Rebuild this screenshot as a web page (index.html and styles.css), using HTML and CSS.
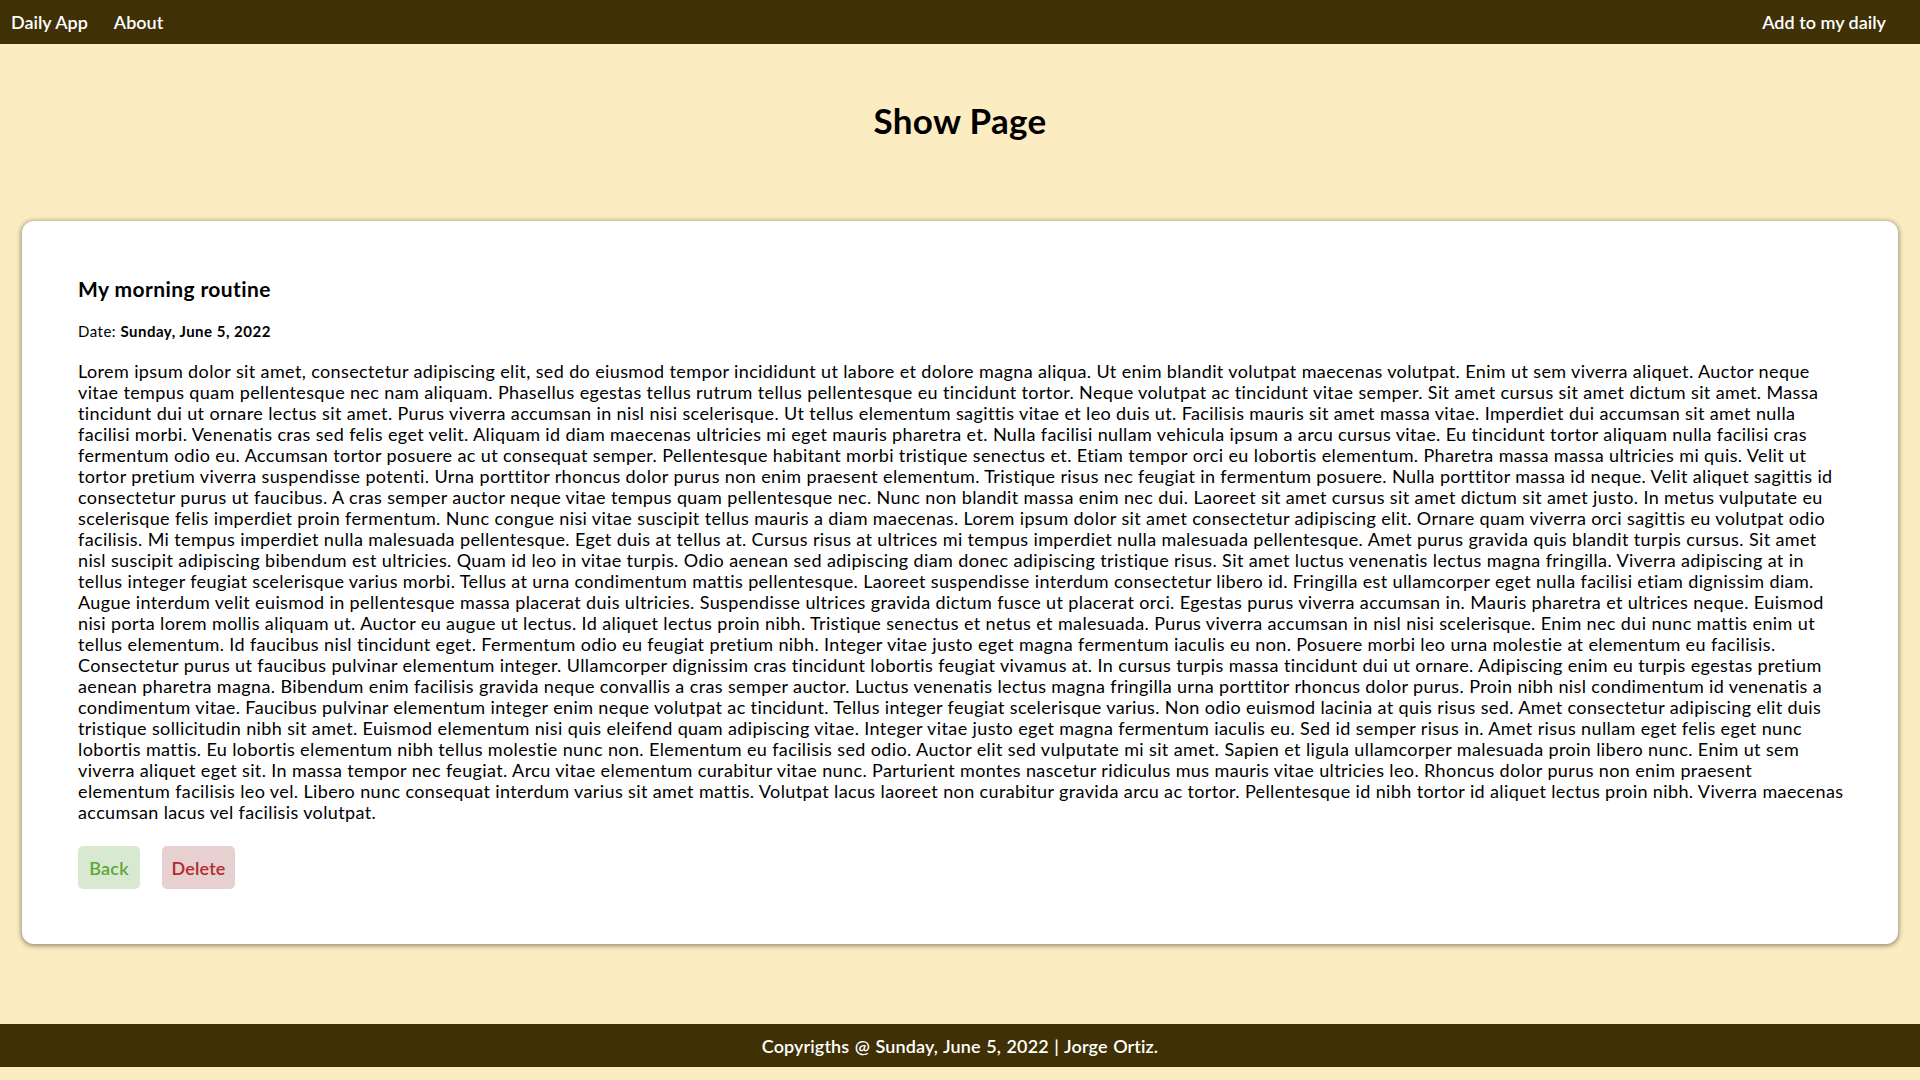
FILE: index.html
```html
<!DOCTYPE html>
<html lang="en">
<head>
<meta charset="utf-8">
<title>Show Page</title>
<link rel="stylesheet" href="styles.css">
</head>
<body>
<nav class="navbar">
  <div class="nav-left">
    <a class="nav-brand" href="#">Daily App</a>
    <a class="nav-link" href="#">About</a>
  </div>
  <a class="nav-link" href="#">Add to my daily</a>
</nav>
<main class="main">
  <h1 class="page-title">Show Page</h1>
  <section class="card">
    <h5 class="card-title">My morning routine</h5>
    <p class="card-date">Date: <strong>Sunday, June 5, 2022</strong></p>
    <p class="card-text">Lorem ipsum dolor sit amet, consectetur adipiscing elit, sed do eiusmod tempor incididunt ut labore et dolore magna aliqua. Ut enim blandit volutpat maecenas volutpat. Enim ut sem viverra aliquet. Auctor neque vitae tempus quam pellentesque nec nam aliquam. Phasellus egestas tellus rutrum tellus pellentesque eu tincidunt tortor. Neque volutpat ac tincidunt vitae semper. Sit amet cursus sit amet dictum sit amet. Massa tincidunt dui ut ornare lectus sit amet. Purus viverra accumsan in nisl nisi scelerisque. Ut tellus elementum sagittis vitae et leo duis ut. Facilisis mauris sit amet massa vitae. Imperdiet dui accumsan sit amet nulla facilisi morbi. Venenatis cras sed felis eget velit. Aliquam id diam maecenas ultricies mi eget mauris pharetra et. Nulla facilisi nullam vehicula ipsum a arcu cursus vitae. Eu tincidunt tortor aliquam nulla facilisi cras fermentum odio eu. Accumsan tortor posuere ac ut consequat semper. Pellentesque habitant morbi tristique senectus et. Etiam tempor orci eu lobortis elementum. Pharetra massa massa ultricies mi quis. Velit ut tortor pretium viverra suspendisse potenti. Urna porttitor rhoncus dolor purus non enim praesent elementum. Tristique risus nec feugiat in fermentum posuere. Nulla porttitor massa id neque. Velit aliquet sagittis id consectetur purus ut faucibus. A cras semper auctor neque vitae tempus quam pellentesque nec. Nunc non blandit massa enim nec dui. Laoreet sit amet cursus sit amet dictum sit amet justo. In metus vulputate eu scelerisque felis imperdiet proin fermentum. Nunc congue nisi vitae suscipit tellus mauris a diam maecenas. Lorem ipsum dolor sit amet consectetur adipiscing elit. Ornare quam viverra orci sagittis eu volutpat odio facilisis. Mi tempus imperdiet nulla malesuada pellentesque. Eget duis at tellus at. Cursus risus at ultrices mi tempus imperdiet nulla malesuada pellentesque. Amet purus gravida quis blandit turpis cursus. Sit amet nisl suscipit adipiscing bibendum est ultricies. Quam id leo in vitae turpis. Odio aenean sed adipiscing diam donec adipiscing tristique risus. Sit amet luctus venenatis lectus magna fringilla. Viverra adipiscing at in tellus integer feugiat scelerisque varius morbi. Tellus at urna condimentum mattis pellentesque. Laoreet suspendisse interdum consectetur libero id. Fringilla est ullamcorper eget nulla facilisi etiam dignissim diam. Augue interdum velit euismod in pellentesque massa placerat duis ultricies. Suspendisse ultrices gravida dictum fusce ut placerat orci. Egestas purus viverra accumsan in. Mauris pharetra et ultrices neque. Euismod nisi porta lorem mollis aliquam ut. Auctor eu augue ut lectus. Id aliquet lectus proin nibh. Tristique senectus et netus et malesuada. Purus viverra accumsan in nisl nisi scelerisque. Enim nec dui nunc mattis enim ut tellus elementum. Id faucibus nisl tincidunt eget. Fermentum odio eu feugiat pretium nibh. Integer vitae justo eget magna fermentum iaculis eu non. Posuere morbi leo urna molestie at elementum eu facilisis. Consectetur purus ut faucibus pulvinar elementum integer. Ullamcorper dignissim cras tincidunt lobortis feugiat vivamus at. In cursus turpis massa tincidunt dui ut ornare. Adipiscing enim eu turpis egestas pretium aenean pharetra magna. Bibendum enim facilisis gravida neque convallis a cras semper auctor. Luctus venenatis lectus magna fringilla urna porttitor rhoncus dolor purus. Proin nibh nisl condimentum id venenatis a condimentum vitae. Faucibus pulvinar elementum integer enim neque volutpat ac tincidunt. Tellus integer feugiat scelerisque varius. Non odio euismod lacinia at quis risus sed. Amet consectetur adipiscing elit duis tristique sollicitudin nibh sit amet. Euismod elementum nisi quis eleifend quam adipiscing vitae. Integer vitae justo eget magna fermentum iaculis eu. Sed id semper risus in. Amet risus nullam eget felis eget nunc lobortis mattis. Eu lobortis elementum nibh tellus molestie nunc non. Elementum eu facilisis sed odio. Auctor elit sed vulputate mi sit amet. Sapien et ligula ullamcorper malesuada proin libero nunc. Enim ut sem viverra aliquet eget sit. In massa tempor nec feugiat. Arcu vitae elementum curabitur vitae nunc. Parturient montes nascetur ridiculus mus mauris vitae ultricies leo. Rhoncus dolor purus non enim praesent elementum facilisis leo vel. Libero nunc consequat interdum varius sit amet mattis. Volutpat lacus laoreet non curabitur gravida arcu ac tortor. Pellentesque id nibh tortor id aliquet lectus proin nibh. Viverra maecenas accumsan lacus vel facilisis volutpat.</p>
    <div class="card-actions">
      <a class="btn btn-back" href="#">Back</a>
      <a class="btn btn-delete" href="#">Delete</a>
    </div>
  </section>
</main>
<footer class="footer">Copyrigths @ Sunday, June 5, 2022 | Jorge Ortiz.</footer>
</body>
</html>
```

FILE: styles.css
```css
* { box-sizing: border-box; }

body {
  margin: 0;
  background: #fcecc1;
  font-family: "Lato", "Liberation Sans", sans-serif;
  color: #000;
}

a { text-decoration: none; }

.navbar {
  height: 44px;
  background: #3f3005;
  display: flex;
  align-items: center;
  justify-content: space-between;
  padding: 0 34px 0 11px;
}

.nav-left {
  display: flex;
  align-items: center;
  gap: 26px;
}

.nav-brand,
.nav-link {
  color: #fff;
  font-size: 18px;
  font-weight: 600;
}

.main {
  padding: 0 22px;
}

.page-title {
  margin: 57px 0 82px;
  text-align: center;
  font-size: 35px;
  line-height: 38px;
  font-weight: 700;
  letter-spacing: 0.3px;
}

.card {
  background: #fff;
  border-radius: 12px;
  box-shadow: 0 1px 5px 1px rgba(0, 0, 0, 0.4);
  padding: 56px 52px 55px 56px;
}

.card-title {
  margin: 0 0 20px;
  font-size: 21px;
  line-height: 24px;
  font-weight: 700;
  letter-spacing: 0.4px;
}

.card-date {
  margin: 0 0 20px;
  font-size: 15px;
  line-height: 20px;
  letter-spacing: 0.5px;
}

.card-date strong { font-weight: 700; }

.card-text {
  margin: 0 0 23px;
  font-size: 18px;
  line-height: 21px;
  letter-spacing: 0.38px;
}

.card-actions {
  display: flex;
  gap: 22px;
}

.btn {
  display: inline-flex;
  align-items: center;
  justify-content: center;
  height: 43px;
  border-radius: 5px;
  font-size: 18px;
  font-weight: 600;
  letter-spacing: 0.2px;
}

.btn-back {
  width: 62px;
  background: #d9e8d0;
  color: #5aaa35;
}

.btn-delete {
  width: 73px;
  background: #e6d0d0;
  color: #b52a2a;
}

.footer {
  margin: 80px 0 14px;
  height: 43px;
  background: #3f3005;
  color: #fff;
  display: flex;
  align-items: center;
  justify-content: center;
  font-size: 18px;
  font-weight: 600;
  letter-spacing: 0.1px;
  word-spacing: 1px;
}
```
